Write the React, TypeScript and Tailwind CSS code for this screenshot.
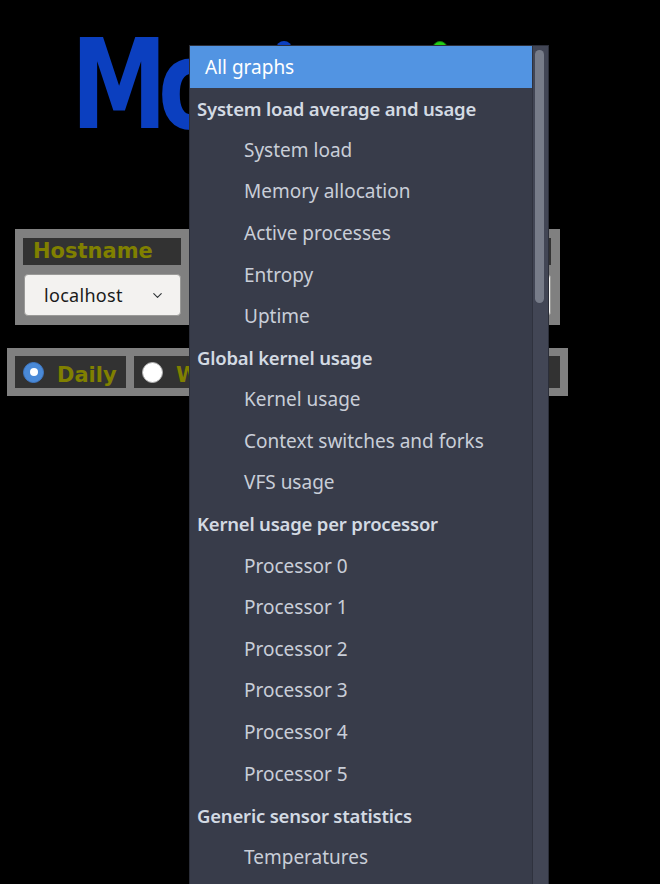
import { ChevronDown } from "lucide-react"

type Entry = { text: string; kind: "selected" | "group" | "option" }

const entries: Entry[] = [
  { text: "All graphs", kind: "selected" },
  { text: "System load average and usage", kind: "group" },
  { text: "System load", kind: "option" },
  { text: "Memory allocation", kind: "option" },
  { text: "Active processes", kind: "option" },
  { text: "Entropy", kind: "option" },
  { text: "Uptime", kind: "option" },
  { text: "Global kernel usage", kind: "group" },
  { text: "Kernel usage", kind: "option" },
  { text: "Context switches and forks", kind: "option" },
  { text: "VFS usage", kind: "option" },
  { text: "Kernel usage per processor", kind: "group" },
  { text: "Processor 0", kind: "option" },
  { text: "Processor 1", kind: "option" },
  { text: "Processor 2", kind: "option" },
  { text: "Processor 3", kind: "option" },
  { text: "Processor 4", kind: "option" },
  { text: "Processor 5", kind: "option" },
  { text: "Generic sensor statistics", kind: "group" },
  { text: "Temperatures", kind: "option" },
]

const periods = [
  { label: "Daily", checked: true, w: "w-[111px]" },
  { label: "Weekly", checked: false, w: "w-[136px]" },
  { label: "Monthly", checked: false, w: "w-[147px]" },
  { label: "Yearly", checked: false, w: "w-[127px]" },
]

const LabelStyle = "bg-[#323232] text-[#808000] font-bold text-[21px] leading-none flex items-center"

const Radio = ({ checked }: { checked: boolean }) =>
  checked ? (
    <span className="w-[21px] h-[21px] rounded-full bg-[#4a8ad8] border border-[#3f78c4] flex items-center justify-center shrink-0">
      <span className="w-[8px] h-[8px] rounded-full bg-white" />
    </span>
  ) : (
    <span className="w-[21px] h-[21px] rounded-full bg-white border border-[#b0b0b0] shrink-0" />
  )

const Dropdown = () => (
  <div className="absolute left-[189px] top-[45px] w-[360px] h-[860px] bg-[#383c4a] border border-[#2b2e39] flex font-['Noto_Sans',sans-serif]">
    <ul className="flex-1 flex flex-col">
      {entries.map((e) => (
        <li
          key={e.text}
          className={
            e.kind === "selected"
              ? "h-[41.6px] shrink-0 flex items-center pl-[15px] bg-[#5294e2] text-white text-[19px]"
              : e.kind === "group"
              ? "h-[41.6px] shrink-0 flex items-center pl-[7px] text-[#d3dae3] font-semibold text-[18.5px] tracking-[-0.2px]"
              : "h-[41.6px] shrink-0 flex items-center pl-[54px] text-[#c9ced8] text-[19px]"
          }
        >
          {e.text}
        </li>
      ))}
    </ul>
    <div className="w-[16px] border-l border-[#2f323e] bg-[#424655] pt-[4px] pl-[2px]">
      <div className="w-[9px] h-[253px] rounded-full bg-[#777c89]" />
    </div>
  </div>
)

export default function App() {
  return (
    <div className="relative w-[660px] h-[884px] overflow-hidden bg-black font-['DejaVu_Sans',sans-serif]">
      <div className="relative pt-[23px] pl-[71px] h-[147px]">
        <div className="h-[124px] text-[124px] leading-none font-bold text-[#0b3fbf] scale-x-[0.78] origin-left whitespace-nowrap tracking-[-12px]">
          Mo<span className="text-[104px]">nıtorıx</span>
        </div>
        <span className="absolute left-[276px] top-[41px] w-[16px] h-[16px] rounded-full bg-[#0b3fbf]" />
        <span className="absolute left-[432px] top-[41px] w-[16px] h-[16px] rounded-full bg-[#22d014] border border-[#157a0e]" />
      </div>

      <div className="mt-[82px] ml-[15px] w-[545px] bg-[#808080] p-[9px] pl-[8px] flex gap-[9px]">
        <div className="w-[158px] flex flex-col gap-[9px]">
          <div className={`${LabelStyle} h-[27px] pl-[10px]`}>Hostname</div>
          <div className="h-[42px] ml-[1px] rounded-[4px] border border-[#9a9a98] bg-[#f3f2f0] flex items-center pl-[19px] pr-[15px] text-[18px] text-[#1a1a1a] font-['Noto_Sans',sans-serif] tracking-[0.3px]">
            <span className="flex-1">localhost</span>
            <ChevronDown size={15} strokeWidth={1.8} className="text-[#2e3436]" />
          </div>
        </div>
        <div className="flex-1 flex flex-col gap-[9px]">
          <div className={`${LabelStyle} h-[27px] pl-[10px]`}>Graph</div>
          <div className="h-[42px] rounded-[4px] border border-[#9a9a98] bg-[#f3f2f0]" />
        </div>
      </div>

      <div className="mt-[23px] ml-[7px] w-[561px] bg-[#808080] p-[8px] flex gap-[8px]">
        {periods.map((p) => (
          <div key={p.label} className={`${LabelStyle} ${p.w} h-[32px] pl-[8px] gap-[13px]`}>
            <Radio checked={p.checked} />
            <span className="pt-[6px]">{p.label}</span>
          </div>
        ))}
      </div>

      <Dropdown />
    </div>
  )
}
